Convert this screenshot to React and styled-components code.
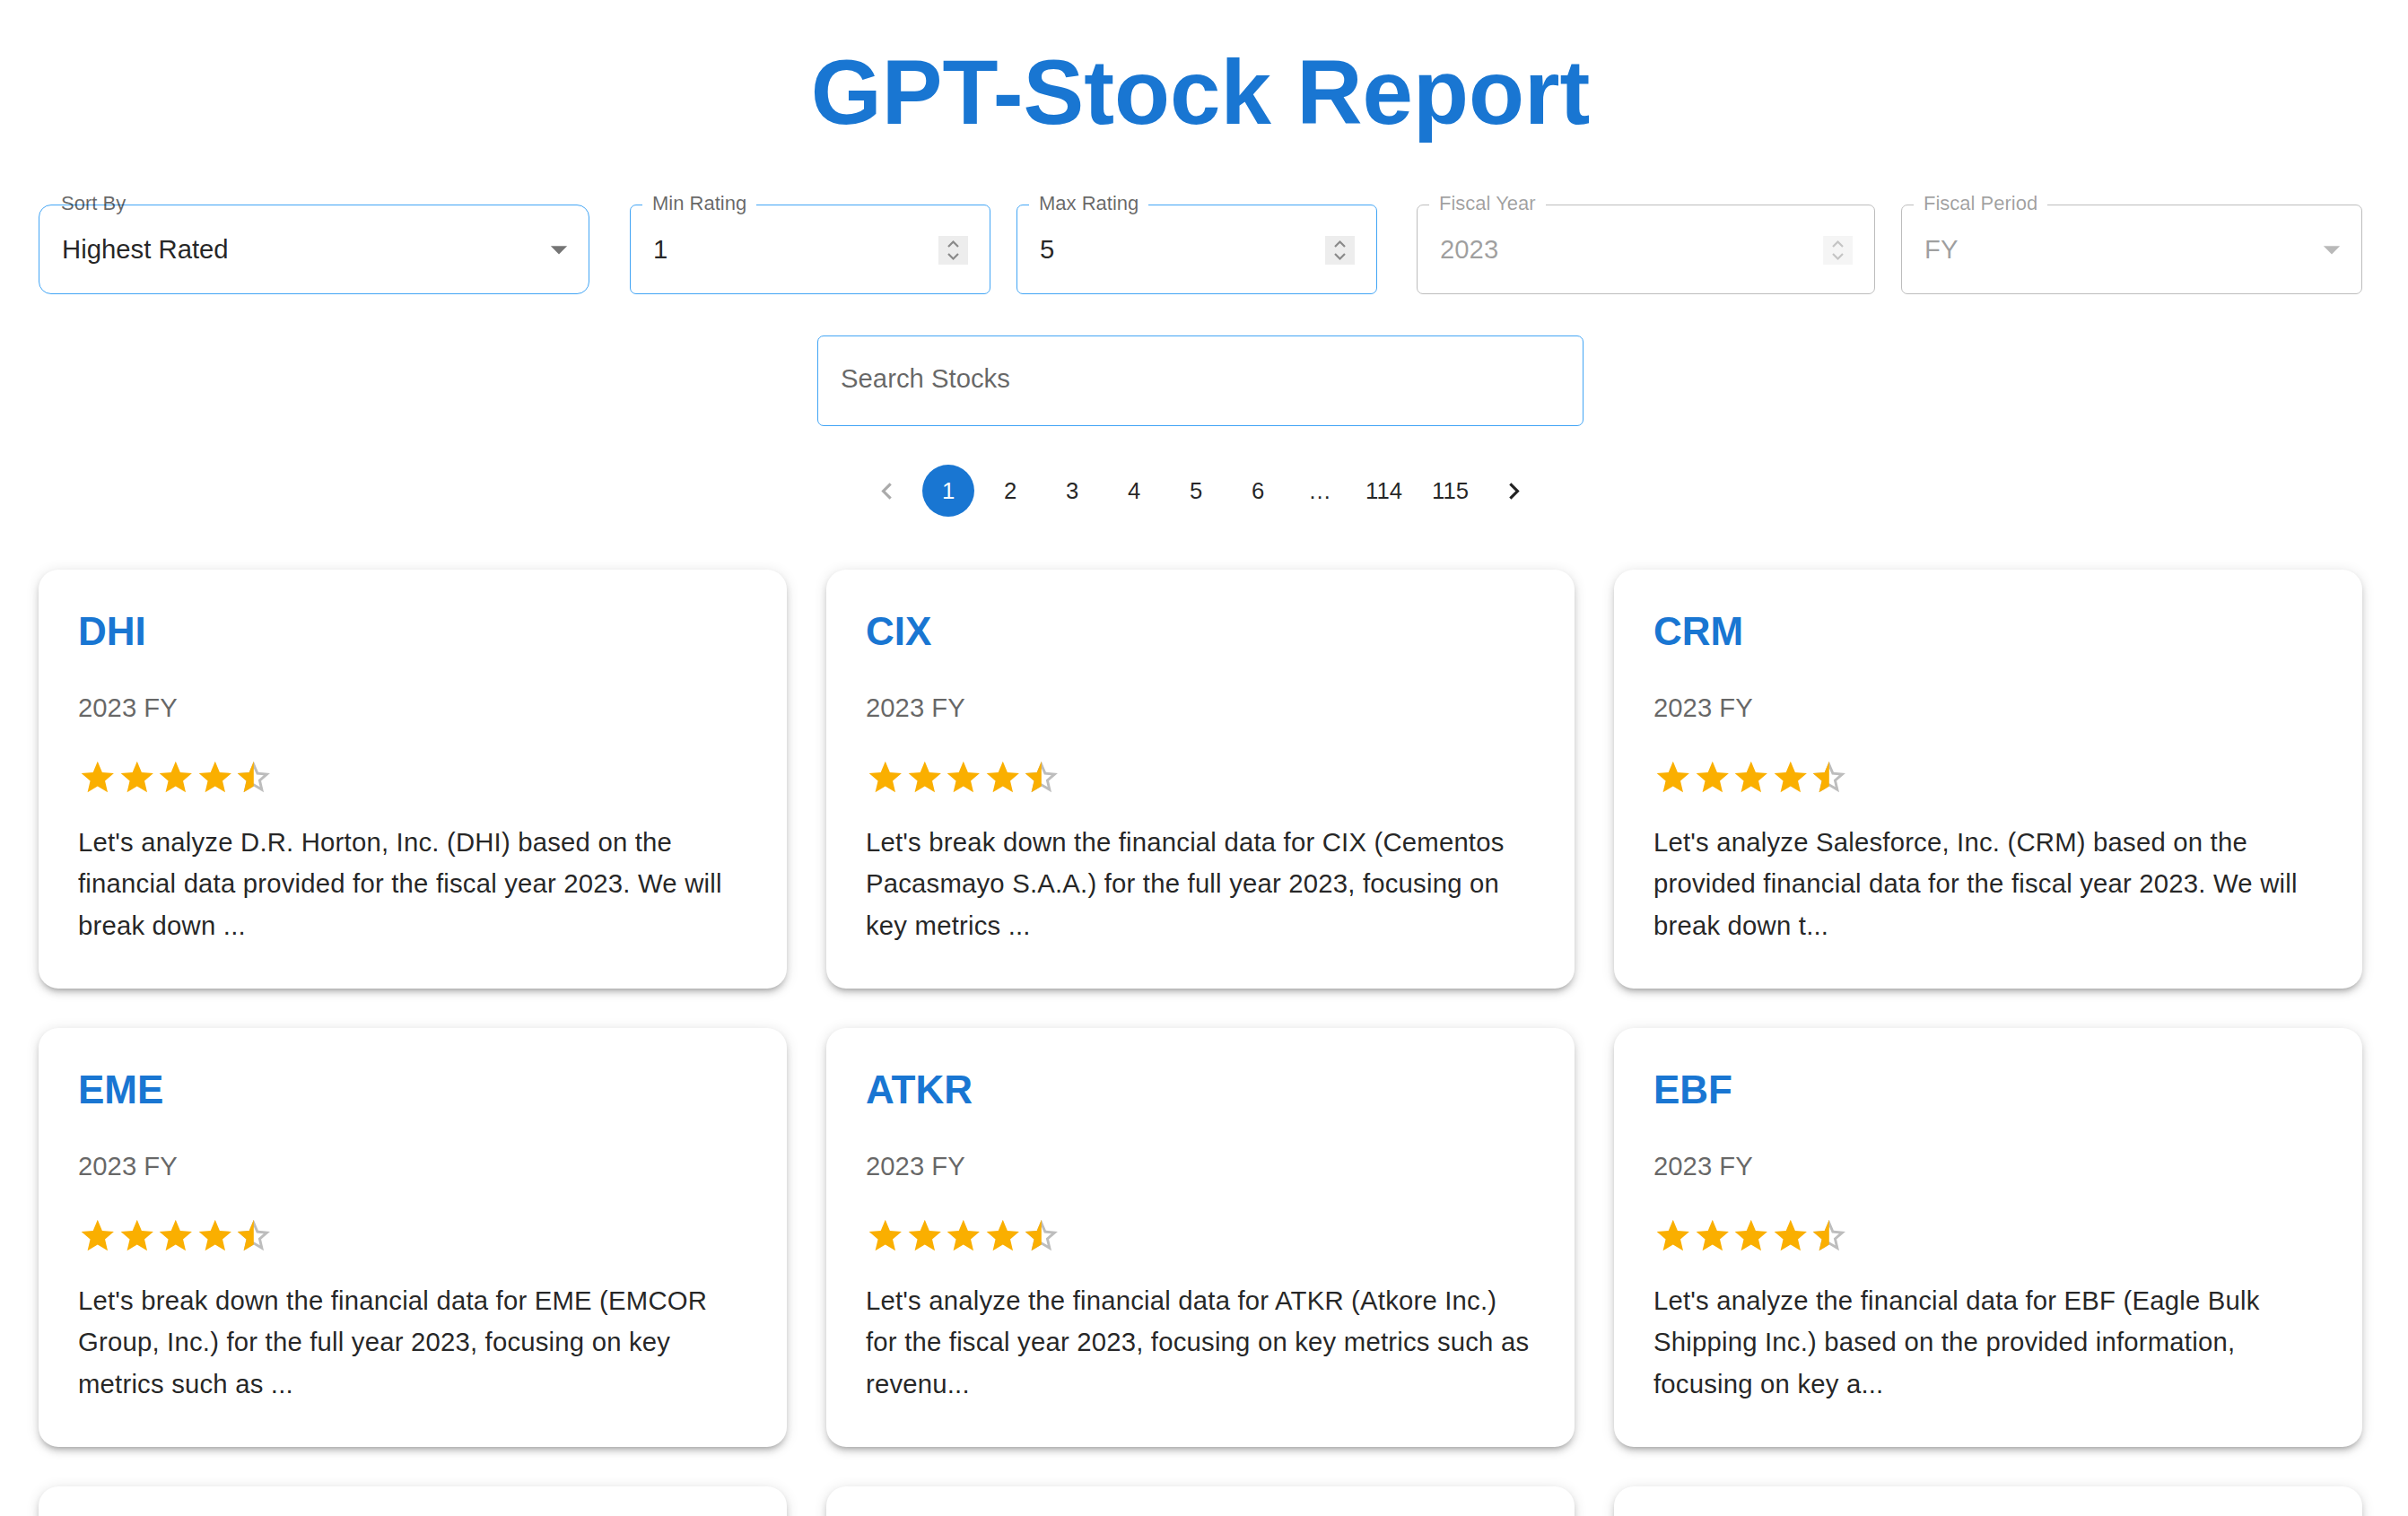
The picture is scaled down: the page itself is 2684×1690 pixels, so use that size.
import React from 'react'
import styled, { createGlobalStyle } from 'styled-components'

const GlobalStyle = createGlobalStyle`
  html, body { margin: 0; padding: 0; background: #fff; }
  body { font-family: "Liberation Sans", Arial, sans-serif; color: rgba(0,0,0,.87); }
`

const Page = styled.div`
  height: 1690px;
  overflow: hidden;
  box-sizing: border-box;
  padding: 0 51px 0 43px;
`

const Title = styled.h1`
  margin: 0;
  padding-top: 44px;
  height: 184px;
  box-sizing: border-box;
  text-align: center;
  font-size: 101.5px;
  line-height: 118px;
  font-weight: 700;
  color: #1976d2;
`

const Filters = styled.div`
  display: flex;
  height: 100px;
  margin-top: 44px;
`

const Group = styled.div`
  display: flex;
  flex: ${p => p.$grow};
  gap: 29px;
  margin-right: ${p => p.$gap || 0}px;
`

const Field = styled.div`
  position: relative;
  flex: 1;
  box-sizing: border-box;
  height: 100px;
  display: flex;
  align-items: center;
  justify-content: space-between;
  padding: 0 ${p => (p.$select ? 27 : 24)}px 0 25px;
  border: 1px solid ${p => (p.$disabled ? '#bdbdbd' : '#42a5f5')};
  border-radius: ${p => (p.$select && !p.$disabled ? 14 : 7)}px;
  font-size: 29.3px;
  color: ${p => (p.$disabled ? 'rgba(0,0,0,.38)' : 'rgba(0,0,0,.87)')};
`

const Label = styled.label`
  position: absolute;
  top: -15px;
  left: ${p => (p.$plain ? 24 : 13)}px;
  padding: 0 ${p => (p.$plain ? 0 : 11)}px;
  background: ${p => (p.$plain ? 'transparent' : '#fff')};
  font-size: 22px;
  line-height: 26px;
  color: ${p => (p.$disabled ? 'rgba(0,0,0,.38)' : 'rgba(0,0,0,.6)')};
`

const Caret = styled.svg`
  width: 44px;
  height: 44px;
  margin-right: -16px;
  fill: rgba(0,0,0,.54);
  opacity: ${p => (p.$disabled ? 0.5 : 1)};
`

const Spinner = styled.span`
  width: 33px;
  height: 32px;
  display: flex;
  background: #ededed;
  margin-top: 2px;
  opacity: ${p => (p.$disabled ? 0.5 : 1)};
`

const SearchRow = styled.div`
  display: flex;
  justify-content: center;
  margin-top: 46px;
`

const SearchBox = styled.div`
  box-sizing: border-box;
  width: 854px;
  height: 101px;
  padding: 0 25px 6px;
  display: flex;
  align-items: center;
  border: 1px solid #42a5f5;
  border-radius: 7px;
  font-size: 29.3px;
  color: rgba(0,0,0,.6);
`

const Pager = styled.nav`
  display: flex;
  justify-content: center;
  align-items: center;
  margin-top: 43px;
  height: 58px;
`

const PageItem = styled.span`
  box-sizing: border-box;
  min-width: 58px;
  height: 58px;
  margin: 0 5.5px;
  padding: 0 ${p => (p.$wide ? 11 : 0)}px;
  border-radius: 29px;
  display: flex;
  align-items: center;
  justify-content: center;
  font-size: 25.7px;
  background: ${p => (p.$active ? '#1976d2' : 'transparent')};
  color: ${p => (p.$active ? '#fff' : 'rgba(0,0,0,.87)')};
`

const Chevron = styled.svg`
  width: 37px;
  height: 37px;
  fill: currentColor;
  opacity: ${p => (p.$disabled ? 0.38 : 1)};
`

const Grid = styled.div`
  display: grid;
  grid-template-columns: repeat(3, 1fr);
  gap: 44px;
  margin-top: 59px;
`

const Card = styled.article`
  box-sizing: border-box;
  height: 467px;
  padding: 42px 45px 0 44px;
  border-radius: 22px;
  background: #fff;
  box-shadow: 0 5px 5px -4px rgba(0,0,0,.2), 0 5px 7px 0 rgba(0,0,0,.14), 0 2px 15px 0 rgba(0,0,0,.12);
`

const Ticker = styled.h2`
  margin: 0;
  font-size: 44px;
  line-height: 53px;
  font-weight: 700;
  color: #1976d2;
`

const Period = styled.div`
  margin-top: 37px;
  font-size: 29.3px;
  line-height: 44px;
  color: rgba(0,0,0,.6);
`

const Stars = styled.div`
  display: flex;
  margin-top: 34px;
  height: 44px;
`

const Star = styled.svg`
  width: 43.6px;
  height: 44px;
  display: block;
`

const Summary = styled.p`
  margin: 27px 0 0;
  font-size: 29.3px;
  line-height: 46.4px;
  letter-spacing: .2px;
`

const FULL = 'M12 17.27 18.18 21l-1.64-7.03L22 9.24l-7.19-.61L12 2 9.19 8.63 2 9.24l5.46 4.73L5.82 21z'
const EMPTY = 'M22 9.24l-7.19-.62L12 2 9.19 8.63 2 9.24l5.46 4.73L5.82 21 12 17.27 18.18 21l-1.63-7.03L22 9.24zM12 15.4l-3.76 2.27 1-4.28-3.32-2.88 4.38-.38L12 6.1l1.71 4.04 4.38.38-3.32 2.88 1 4.28L12 15.4z'

const reports = [
  ['DHI', "Let's analyze D.R. Horton, Inc. (DHI) based on the financial data provided for the fiscal year 2023. We will break down ..."],
  ['CIX', "Let's break down the financial data for CIX (Cementos Pacasmayo S.A.A.) for the full year 2023, focusing on key metrics ..."],
  ['CRM', "Let's analyze Salesforce, Inc. (CRM) based on the provided financial data for the fiscal year 2023. We will break down t..."],
  ['EME', "Let's break down the financial data for EME (EMCOR Group, Inc.) for the full year 2023, focusing on key metrics such as ..."],
  ['ATKR', "Let's analyze the financial data for ATKR (Atkore Inc.) for the fiscal year 2023, focusing on key metrics such as revenu..."],
  ['EBF', "Let's analyze the financial data for EBF (Eagle Bulk Shipping Inc.) based on the provided information, focusing on key a..."],
]

function Rating() {
  return (
    <Stars>
      {[0, 1, 2, 3].map(i => (
        <Star key={i} viewBox="0 0 24 24"><path d={FULL} fill="#faaf00" /></Star>
      ))}
      <Star viewBox="0 0 24 24">
        <path d={EMPTY} fill="#bdbdbd" />
        <path d={FULL} fill="#faaf00" clipPath="inset(0 50% 0 0)" />
      </Star>
    </Stars>
  )
}

function Spin({ disabled }) {
  return (
    <Spinner $disabled={disabled}>
      <svg width="33" height="32" viewBox="0 0 33 32" fill="none" stroke="#8a8a8a" strokeWidth="2.2">
        <path d="M11 12l5.5-5.5L22 12M11 20l5.5 5.5L22 20" />
      </svg>
    </Spinner>
  )
}

function ReportCard({ ticker, text }) {
  return (
    <Card>
      <Ticker>{ticker}</Ticker>
      <Period>2023 FY</Period>
      <Rating />
      <Summary>{text}</Summary>
    </Card>
  )
}

export default function App() {
  return (
    <Page>
      <GlobalStyle />
      <Title>GPT-Stock Report</Title>
      <Filters>
        <Group $grow="0 0 614px" $gap={45}>
          <Field $select>
            <Label $plain>Sort By</Label>
            Highest Rated
            <Caret viewBox="0 0 24 24"><path d="M7 10l5 5 5-5z" /></Caret>
          </Field>
        </Group>
        <Group $grow="0 0 833px" $gap={44}>
          <Field>
            <Label>Min Rating</Label>
            1
            <Spin />
          </Field>
          <Field>
            <Label>Max Rating</Label>
            5
            <Spin />
          </Field>
        </Group>
        <Group $grow="1">
          <Field $disabled>
            <Label $disabled>Fiscal Year</Label>
            2023
            <Spin disabled />
          </Field>
          <Field $disabled $select>
            <Label $disabled>Fiscal Period</Label>
            FY
            <Caret $disabled viewBox="0 0 24 24"><path d="M7 10l5 5 5-5z" /></Caret>
          </Field>
        </Group>
      </Filters>
      <SearchRow>
        <SearchBox>Search Stocks</SearchBox>
      </SearchRow>
      <Pager>
        <PageItem>
          <Chevron $disabled viewBox="0 0 24 24"><path d="M15.41 7.41 14 6l-6 6 6 6 1.41-1.41L10.83 12z" /></Chevron>
        </PageItem>
        <PageItem $active>1</PageItem>
        <PageItem>2</PageItem>
        <PageItem>3</PageItem>
        <PageItem>4</PageItem>
        <PageItem>5</PageItem>
        <PageItem>6</PageItem>
        <PageItem>…</PageItem>
        <PageItem $wide>114</PageItem>
        <PageItem $wide>115</PageItem>
        <PageItem>
          <Chevron viewBox="0 0 24 24"><path d="M10 6 8.59 7.41 13.17 12l-4.58 4.59L10 18l6-6z" /></Chevron>
        </PageItem>
      </Pager>
      <Grid>
        {reports.map(([ticker, text]) => (
          <ReportCard key={ticker} ticker={ticker} text={text} />
        ))}
        <Card />
        <Card />
        <Card />
      </Grid>
    </Page>
  )
}
